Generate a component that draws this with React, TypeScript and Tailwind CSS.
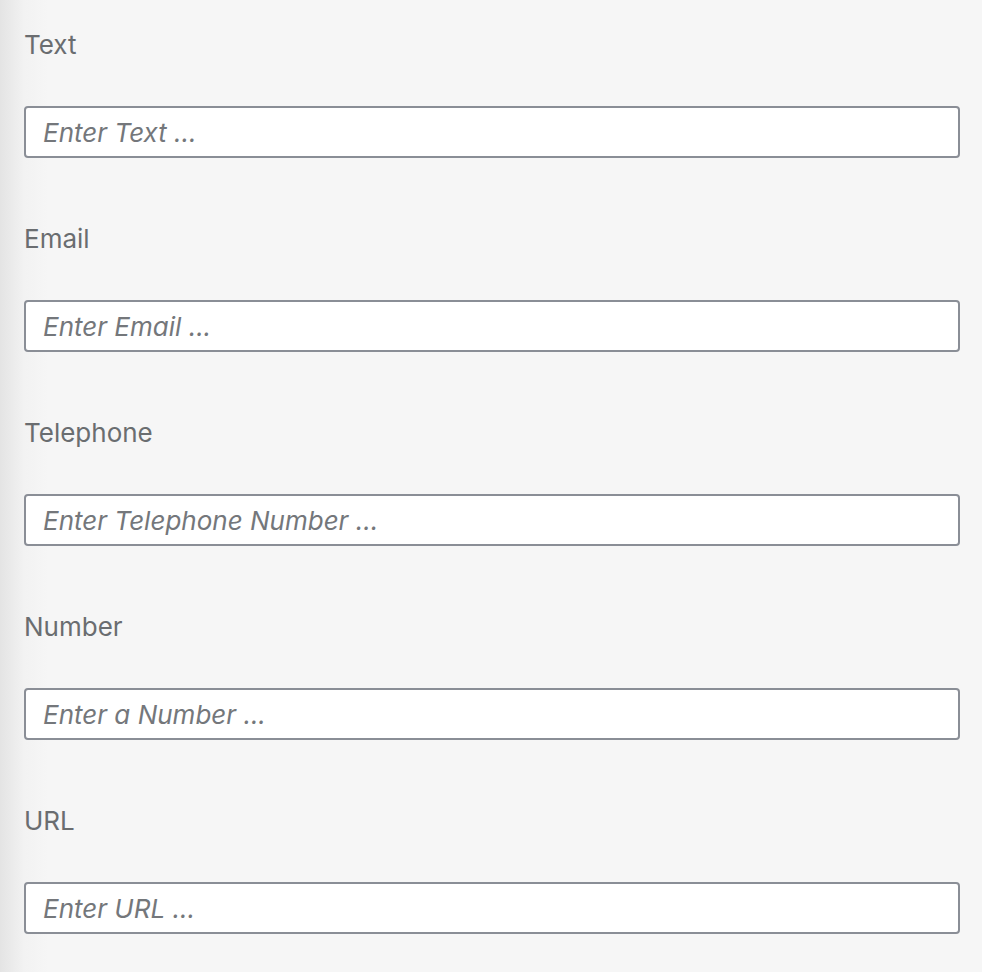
const fields = [
  { label: "Text", placeholder: "Enter Text ...", type: "text" },
  { label: "Email", placeholder: "Enter Email ...", type: "email" },
  { label: "Telephone", placeholder: "Enter Telephone Number ...", type: "tel" },
  { label: "Number", placeholder: "Enter a Number ...", type: "number" },
  { label: "URL", placeholder: "Enter URL ...", type: "url" },
]

export default function App() {
  return (
    <div
      className="min-h-[972px] w-full bg-[linear-gradient(to_right,#e4e4e4,#f2f2f2_24px,#f6f6f6_48px)] pl-6 pr-[22px]"
      style={{ fontFamily: 'Inter, "Liberation Sans", Arial, sans-serif' }}
    >
      {fields.map((f) => (
        <div key={f.label} className="flex flex-col pt-[30px] pb-[36px]">
          <label className="text-[26px] leading-[30px] text-[#6a6d70]">{f.label}</label>
          <input
            type="text"
            inputMode={f.type === "number" ? "numeric" : undefined}
            placeholder={f.placeholder}
            className="mt-[46px] h-[52px] w-full rounded-[4px] border-2 border-[#8a8e96] bg-white pl-[17px] text-[26px] text-[#32363a] italic outline-none placeholder:text-[#74777b] placeholder:italic"
          />
        </div>
      ))}
    </div>
  )
}
